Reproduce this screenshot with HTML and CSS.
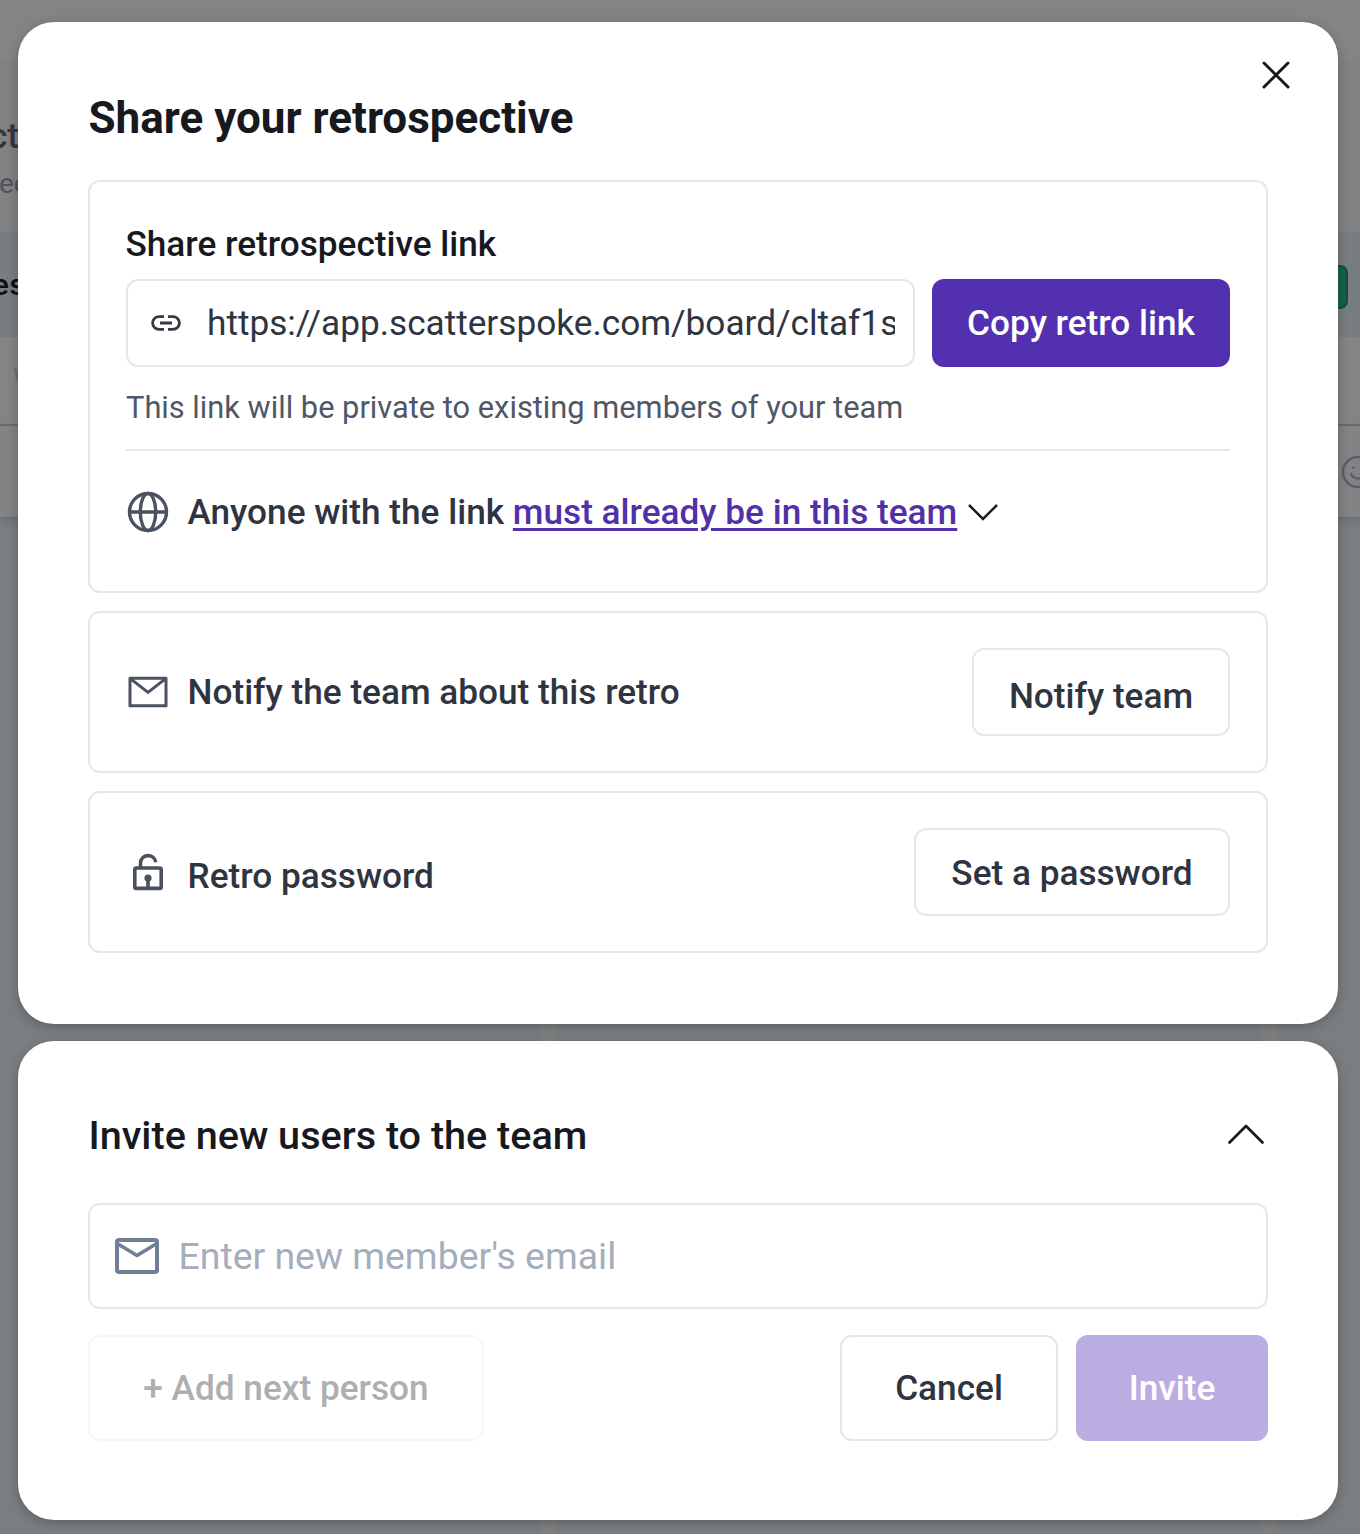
FILE: index.html
```html
<!DOCTYPE html>
<html lang="en">
<head>
  <meta charset="UTF-8" />
  <meta name="viewport" content="width=device-width, initial-scale=1" />
  <title>Share your retrospective</title>
  <link rel="stylesheet" href="styles.css">
</head>
<body>

  <!-- Board behind the modal -->
  <div class="board" aria-hidden="true">
    <div class="board-nav"></div>
    <div class="board-header">
      <div class="board-title">ct</div>
      <div class="board-subtitle">ec</div>
    </div>
    <div class="board-toolbar">
      <span class="toolbar-title">es</span>
      <span class="toolbar-btn"></span>
    </div>
    <div class="board-input">W</div>
    <div class="board-actions">
      <svg width="34" height="34" viewBox="0 0 34 34" fill="none" stroke="#5b5e66" stroke-width="2.4" stroke-linecap="round">
        <circle cx="17" cy="17" r="15"/>
        <path d="M10 19c3 6 11 6 14 0"/>
        <path d="M12.5 12.5v.2M21.5 12.5v.2"/>
      </svg>
    </div>
    <div class="board-columns">
      <div class="column first"></div>
      <div class="column second"></div>
      <div class="column third"></div>
    </div>
  </div>

  <div class="modal">
    <section class="card share-card">
      <button class="close-btn" aria-label="Close">
        <svg width="28" height="28" viewBox="0 0 28 28" fill="none" stroke="#17191e" stroke-width="3" stroke-linecap="round">
          <path d="M2 2l24 24M26 2L2 26"/>
        </svg>
      </button>
      <h1>Share your retrospective</h1>

      <div class="box link-box">
        <h3>Share retrospective link</h3>
        <div class="link-row">
          <div class="link-input">
            <svg width="30" height="16" viewBox="0 0 30 16" fill="none" stroke="#363943" stroke-width="2.8">
              <path d="M13 1.6H8a6.4 6.4 0 0 0 0 12.8h5M17 1.6h5a6.4 6.4 0 0 1 0 12.8h-5M9 8h12"/>
            </svg>
            <span class="link-url">https://app.scatterspoke.com/board/cltaf1s</span>
          </div>
          <button class="btn btn-primary copy-btn">Copy retro link</button>
        </div>
        <p class="link-note">This link will be private to existing members of your team</p>
        <div class="access-row">
          <svg class="row-icon" width="44" height="44" viewBox="0 0 44 44" fill="none" stroke="#4a5160" stroke-width="3.4">
            <circle cx="22" cy="22" r="18.5"/>
            <ellipse cx="22" cy="22" rx="7.7" ry="18.5"/>
            <path d="M3 22h38"/>
          </svg>
          <span class="row-label">Anyone with the link <a href="#">must already be in this team</a></span>
          <svg class="chevron-down" width="30" height="18" viewBox="0 0 30 18" fill="none" stroke="#1b1d22" stroke-width="2.5">
            <path d="M1 2l14 14L29 2"/>
          </svg>
        </div>
      </div>

      <div class="box action-box">
        <svg class="row-icon" width="44" height="44" viewBox="0 0 44 44" fill="none" stroke="#4a5160" stroke-width="3" stroke-linejoin="round">
          <path d="M4 8.2h36v27.600H4zM4 8.400l18 14L40 8.400"/>
        </svg>
        <span class="row-label">Notify the team about this retro</span>
        <button class="btn notify-btn">Notify team</button>
      </div>

      <div class="box action-box password-box">
        <svg class="row-icon" width="44" height="44" viewBox="0 0 44 44" fill="none" stroke="#4a5160" stroke-width="3.6">
          <rect x="8.8" y="18" width="26.4" height="20.4" rx="1.5"/>
          <path d="M14.5 18v-4.500c0-10 14-10.500 15.300-1.200"/>
          <circle cx="22" cy="28" r="3.6" fill="#4a5160" stroke="none"/>
          <path d="M22 28v10"/>
        </svg>
        <span class="row-label">Retro password</span>
        <button class="btn password-btn">Set a password</button>
      </div>
    </section>

    <section class="card invite-card">
      <div class="invite-header">
        <h2>Invite new users to the team</h2>
        <svg width="36" height="22" viewBox="0 0 36 22" fill="none" stroke="#17191e" stroke-width="2.7" stroke-linecap="round" stroke-linejoin="round">
          <path d="M1.500 18.500L18 2l16.500 16.500"/>
        </svg>
      </div>
      <div class="email-input">
        <svg width="44" height="36" viewBox="0 0 44 36" fill="none" stroke="#6f7f94" stroke-width="4" stroke-linejoin="round">
          <rect x="2" y="2" width="40" height="32" rx="2"/>
          <path d="M3 6l19 11.500L41 6" stroke-width="3.600"/>
        </svg>
        <span>Enter new member's email</span>
      </div>
      <div class="invite-actions">
        <button class="btn add-btn" disabled>+ Add next person</button>
        <button class="btn cancel-btn">Cancel</button>
        <button class="btn btn-primary invite-btn" disabled>Invite</button>
      </div>
    </section>
  </div>

</body>
</html>
```

FILE: styles.css
```css
:root {
  --primary-color: #5230b0;
  --primary-disabled: #baade2;
  --heading: #17191e;
  --foreground: #2f3441;
  --muted: #4f5767;
  --placeholder: #a4adbc;
  --border-color: #e5e7e9;
}
* {
  box-sizing: border-box;
}
body {
  margin: 0;
  height: 1534px;
  overflow: hidden;
  background: #7a7e81;
  font-family: Roboto, sans-serif;
  color: var(--foreground);
}
h1, h2, h3, p {
  margin: 0;
}

/* Dimmed board */
.board {
  position: absolute;
  top: 0;
  left: 0;
  width: 100%;
  height: 1534px;
  overflow: hidden;
  display: flex;
  flex-direction: column;
}
.board-nav {
  height: 65px;
  background: #848484;
  border-bottom: 2px solid #7d7f81;
}
.board-header {
  height: 167px;
  padding-top: 51px;
  background: #818283;
}
.board-title {
  margin-left: -11px;
  font-size: 35px;
  line-height: 42px;
  font-weight: 500;
  color: #34373d;
}
.board-subtitle {
  margin-top: 8px;
  font-size: 28px;
  line-height: 36px;
  margin-left: -1px;
  color: #4f535c;
}
.board-toolbar {
  height: 105px;
  display: flex;
  align-items: center;
  justify-content: space-between;
  padding-right: 12px;
  background: #787d82;
}
.toolbar-title {
  margin-left: -8px;
  font-family: Inter, sans-serif;
  font-size: 29px;
  font-weight: 600;
  color: #101114;
}
.toolbar-btn {
  width: 60px;
  height: 44px;
  margin-top: 4px;
  border: 2px solid #174b3a;
  border-radius: 8px;
  background: #176047;
}
.board-input {
  height: 89px;
  padding: 25px 13px;
  background: #848484;
  border-bottom: 2px solid #6b6d70;
  font-size: 28px;
  color: #6c6e70;
}
.board-actions {
  height: 91px;
  display: flex;
  justify-content: flex-end;
  align-items: center;
  background: #828384;
  box-shadow: 0 3px 8px rgba(0, 0, 0, 0.15);
  z-index: 1;
}
.board-actions svg {
  flex: none;
  margin-right: -15px;
}
.board-columns {
  flex: 1;
  display: flex;
  gap: 16px;
  background: #7f8081;
}
.column {
  background: #7a7e81;
}
.column.first {
  width: 540px;
}
.column.second {
  width: 706px;
}
.column.third {
  flex: 1;
}

/* Modal */
.modal {
  position: relative;
  z-index: 2;
  display: flex;
  flex-direction: column;
  gap: 17px;
  width: 1320px;
  margin: 0 0 0 18px;
  padding-top: 22px;
}
.card {
  position: relative;
  padding: 0 70px;
  border-radius: 36px;
  background: #fff;
  box-shadow: 0 3px 12px rgba(0, 0, 0, 0.24);
}
.share-card {
  height: 1002px;
  padding-top: 70px;
  display: flex;
  flex-direction: column;
  gap: 18px;
}
.close-btn {
  position: absolute;
  top: 39px;
  right: 48px;
  padding: 0;
  border: none;
  background: none;
  line-height: 0;
  cursor: pointer;
}
h1 {
  height: 70px;
  padding-left: 0.5px;
  font-size: 44px;
  line-height: 52px;
  font-weight: 700;
  color: var(--heading);
}
.box {
  flex: none;
  border: 2px solid var(--border-color);
  border-radius: 12px;
  padding: 35px 36px;
}
.link-box {
  height: 413px;
}
.link-box h3 {
  height: 62px;
  padding-top: 5px;
  margin-left: -0.5px;
  font-size: 35.2px;
  line-height: 44px;
  font-weight: 500;
  color: var(--heading);
}
.link-row {
  display: flex;
  gap: 17px;
}
.link-input {
  display: flex;
  align-items: center;
  flex: 1;
  min-width: 0;
  height: 88px;
  padding: 0 18px 0 22.5px;
  border: 2px solid var(--border-color);
  border-radius: 12px;
}
.link-input svg {
  flex: none;
}
.link-url {
  margin-left: 26.5px;
  overflow: hidden;
  white-space: nowrap;
  font-size: 35.2px;
  line-height: 44px;
}
.btn {
  flex: none;
  height: 88px;
  padding: 0;
  border: 2px solid var(--border-color);
  border-radius: 12px;
  background: #fff;
  font-family: inherit;
  font-size: 35.2px;
  font-weight: 500;
  color: var(--foreground);
  white-space: nowrap;
  cursor: pointer;
}
.btn-primary {
  border: none;
  background: var(--primary-color);
  color: #fff;
}
.copy-btn {
  width: 298px;
}
.link-note {
  height: 84px;
  padding-top: 21px;
  border-bottom: 2px solid var(--border-color);
  font-size: 30.8px;
  line-height: 40px;
  color: var(--muted);
}
.access-row {
  display: flex;
  align-items: center;
  padding-top: 39px;
}
.row-icon {
  flex: none;
  margin-right: 17.5px;
}
.row-label {
  font-size: 35.2px;
  line-height: 44px;
  font-weight: 500;
  white-space: nowrap;
}
.row-label a {
  color: #5230a8;
  text-decoration-thickness: 3px;
  text-underline-offset: 4px;
}
.chevron-down {
  margin-left: 11px;
}
.action-box {
  display: flex;
  align-items: center;
  height: 162px;
}
.action-box .btn {
  margin-left: auto;
}
.notify-btn {
  width: 258px;
  padding-top: 8px;
}
.password-btn {
  width: 316px;
  padding-top: 2px;
}
.password-box .row-label {
  padding-top: 8px;
}

/* Invite */
.invite-card {
  height: 479px;
  padding-top: 66px;
}
.invite-header {
  display: flex;
  align-items: center;
  justify-content: space-between;
  height: 56px;
  padding: 0 4px 0 0.5px;
}
h2 {
  padding-top: 2px;
  font-size: 39.6px;
  line-height: 56px;
  font-weight: 500;
  color: var(--heading);
}
.email-input {
  display: flex;
  align-items: center;
  gap: 20px;
  height: 106px;
  margin-top: 40px;
  padding: 0 24px 1px 24.5px;
  border: 2px solid var(--border-color);
  border-radius: 12px;
  font-size: 37.4px;
  color: var(--placeholder);
}
.invite-actions {
  display: flex;
  gap: 18px;
  margin-top: 26px;
}
.invite-actions .btn {
  height: 106px;
}
.invite-actions .add-btn {
  width: 396px;
  margin-right: auto;
  border-color: #f7f7f8;
  color: #adafb1;
}
.cancel-btn {
  width: 218px;
}
.invite-btn {
  width: 192px;
  background: var(--primary-disabled);
}
```
